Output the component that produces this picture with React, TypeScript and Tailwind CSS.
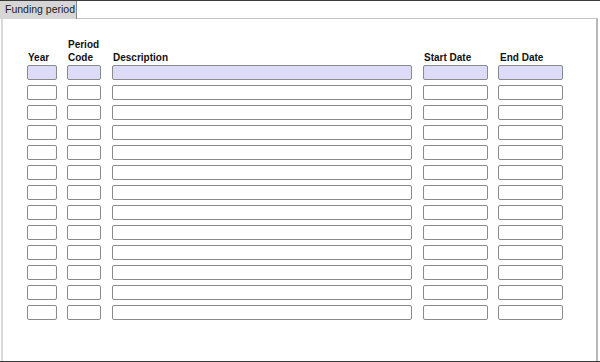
const rows = Array.from({ length: 13 }, (_, i) => i)

// column widths and the spaces between them, read off the screenshot
const colW = ['w-[30px]', 'ml-[10px] w-[34px]', 'ml-[11px] w-[300px]', 'ml-[11px] w-[65px]', 'ml-[10px] w-[65px]']

function Field({ active, className }: { active: boolean; className: string }) {
  return (
    <div
      className={`${className} h-[15px] shrink-0 rounded-[2px] border border-[#8a8a8a] ${
        active ? 'bg-[#dcdcf8]' : 'bg-white'
      }`}
    />
  )
}

export default function App() {
  return (
    <div
      className="flex h-[362px] w-[600px] flex-col overflow-hidden border-t border-b border-[#3a3a3a] bg-white text-black"
      style={{ fontFamily: '"Liberation Sans", Arial, sans-serif' }}
    >
      {/* tab strip */}
      <div className="flex h-[18px] shrink-0">
        <div className="flex w-[77px] items-center border-r border-[#8a8a8a] bg-[#d6d6d6] pl-[5px] text-[10.5px] text-[#222]">
          Funding period
        </div>
        <div className="mr-[2px] flex-1 border-b border-[#c4c4c4]" />
      </div>

      {/* panel */}
      <div className="mr-[2px] ml-[1px] flex-1 border-l-2 border-r-2 border-l-[#d8d8d8] border-r-[#b8b8b8] pl-[24px] pt-[19px]">
        <div className="flex items-end text-[10px] font-bold leading-[13px] text-[#111]">
          <div className={`${colW[0]} pl-px`}>Year</div>
          <div className={`${colW[1]} pl-px`}>
            Period
            <br />
            Code
          </div>
          <div className={`${colW[2]} pl-px`}>Description</div>
          <div className={`${colW[3]} pl-px`}>Start Date</div>
          <div className={`${colW[4]} pl-[2px]`}>End Date</div>
        </div>

        <div className="mt-[1px] flex flex-col gap-[5px]">
          {rows.map((r) => (
            <div key={r} className="flex">
              {colW.map((c, i) => (
                <Field key={i} className={c} active={r === 0} />
              ))}
            </div>
          ))}
        </div>
      </div>
    </div>
  )
}
